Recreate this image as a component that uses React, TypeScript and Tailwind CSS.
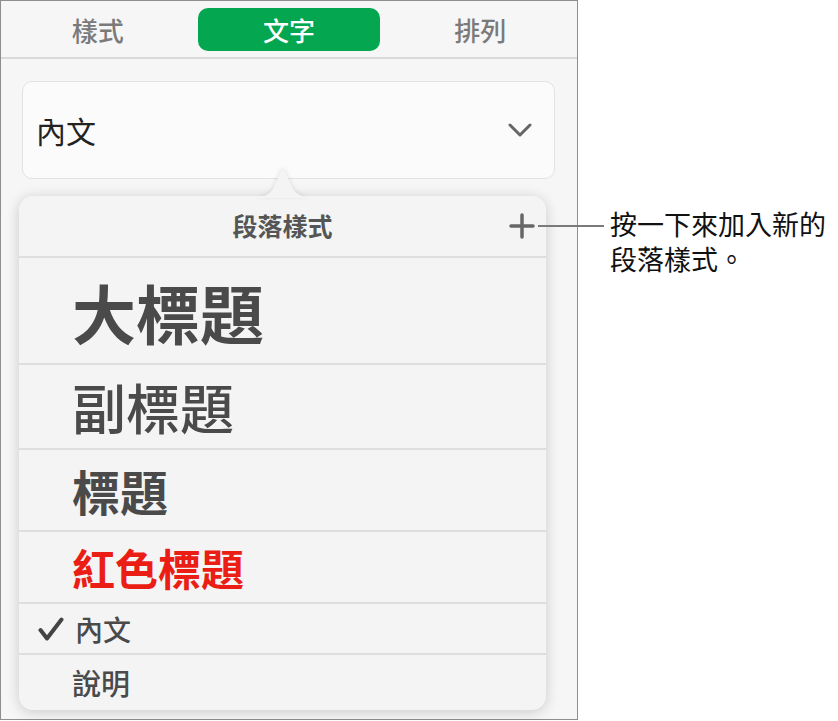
const cjk = 'font-["Noto_Sans_CJK_TC","Noto_Sans",sans-serif]';

function Divider() {
  return <div className="h-[2px] bg-[#dedede]" />;
}

export default function App() {
  return (
    <div className={`relative w-[838px] h-[721px] bg-white ${cjk}`}>
      {/* Sidebar panel */}
      <div className="w-[578px] h-[720px] border border-[#8e8e8e] bg-[#f6f6f6] flex flex-col">
        {/* Tabs */}
        <div className="h-[56px] grid grid-cols-3 items-center px-[1px]">
          <div className="text-center text-[26px] font-medium text-[#7a7a7a]">樣式</div>
          <div className="mx-[5px] h-[43px] rounded-[10px] bg-[#04a64f] flex items-center justify-center text-[26px] font-medium text-white">
            文字
          </div>
          <div className="text-center text-[26px] font-medium text-[#7a7a7a]">排列</div>
        </div>
        <div className="h-[2px] bg-[#dadada]" />

        {/* Style selector */}
        <div className="mt-[22px] ml-[21px] w-[533px] h-[98px] rounded-[10px] border border-[#e2e2e2] bg-[#fbfbfb] flex items-center justify-between pl-[13px] pr-[22px]">
          <span className="text-[30px] text-[#222]">內文</span>
          <svg width="24" height="15" viewBox="0 0 24 15" fill="none">
            <path d="M2 2 L12 12 L22 2" stroke="#666" strokeWidth="3" strokeLinecap="round" strokeLinejoin="round" />
          </svg>
        </div>

        {/* Popover */}
        <div className="relative mt-[17px] ml-[18px] w-[527px] h-[514px] rounded-[14px] bg-[#f4f4f4] shadow-[0_2px_14px_rgba(0,0,0,0.18)] flex flex-col">
          <svg
            className="absolute left-[234px] top-[-27px] drop-shadow-[0_-1px_2px_rgba(0,0,0,0.1)]"
            width="60"
            height="29"
            viewBox="0 0 60 29"
          >
            <path d="M0 29 Q 14 29 20 20 L 28 2 Q 30 -1 32 2 L 40 20 Q 46 29 60 29 Z" fill="#f4f4f4" />
          </svg>

          <div className="relative h-[60px] flex items-center justify-center">
            <span className="text-[25px] font-bold text-[#555]">段落樣式</span>
            <svg className="absolute right-[11px] top-[17px]" width="26" height="26" viewBox="0 0 26 26" fill="none">
              <path d="M13 2 V24 M2 13 H24" stroke="#666" strokeWidth="3.5" strokeLinecap="round" />
            </svg>
          </div>
          <Divider />

          <div className="h-[105px] flex items-center pl-[53px]">
            <span className="text-[64px] font-bold text-[#4a4a4a] leading-none">大標題</span>
          </div>
          <Divider />

          <div className="h-[83px] flex items-center pl-[53px]">
            <span className="text-[54px] font-medium text-[#4a4a4a] leading-none">副標題</span>
          </div>
          <Divider />

          <div className="h-[80px] flex items-center pl-[53px]">
            <span className="text-[48px] font-bold text-[#4a4a4a] leading-none">標題</span>
          </div>
          <Divider />

          <div className="h-[70px] flex items-center pl-[53px]">
            <span className="text-[43px] font-bold text-[#ea1e14] leading-none">紅色標題</span>
          </div>
          <Divider />

          <div className="h-[49px] flex items-center pl-[19px] gap-[11px]">
            <svg width="26" height="24" viewBox="0 0 26 24" fill="none">
              <path d="M2.5 13 L9 21.5 L23.5 2.5" stroke="#444" strokeWidth="4" strokeLinecap="round" strokeLinejoin="round" />
            </svg>
            <span className="text-[28px] font-medium text-[#4a4a4a] leading-none">內文</span>
          </div>
          <Divider />

          <div className="flex-1 flex items-center pl-[53px]">
            <span className="text-[29px] font-medium text-[#4a4a4a] leading-none">說明</span>
          </div>
        </div>
      </div>

      {/* Callout */}
      <div className="absolute left-[538px] top-[225px] w-[66px] h-[2px] bg-[#7a7a7a]" />
      <div className="absolute left-[610px] top-[206px] text-[27px] leading-[35px] text-[#111]">
        <div>按一下來加入新的</div>
        <div>段落樣式。</div>
      </div>
    </div>
  );
}
